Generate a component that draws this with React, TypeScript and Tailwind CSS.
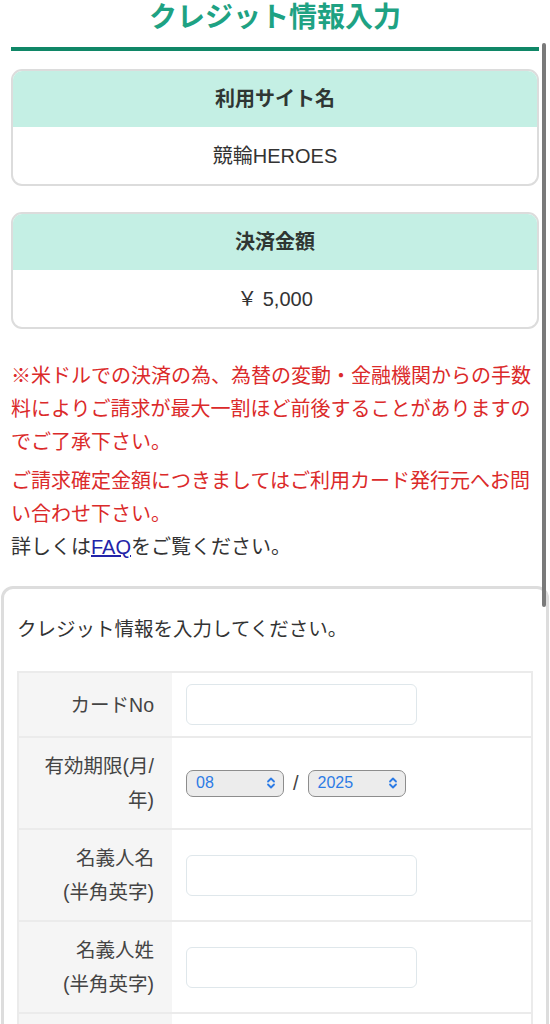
import React from "react";

function InfoCard({ title, value }: { title: string; value: string }) {
  return (
    <div className="border-2 border-[#dcdcdc] rounded-[11px] overflow-hidden bg-white">
      <div className="h-[56px] bg-[#c4efe4] flex items-center justify-center text-[20px] font-bold text-[#2f3633]">
        {title}
      </div>
      <div className="h-[57px] flex items-center justify-center text-[20px] text-[#333]">
        {value}
      </div>
    </div>
  );
}

function Chevron() {
  return (
    <svg width="10" height="14" viewBox="0 0 10 14" fill="none" stroke="#2c7be5" strokeWidth="1.8" strokeLinecap="round" strokeLinejoin="round">
      <path d="M2 5.5 L5 2.5 L8 5.5" />
      <path d="M2 8.5 L5 11.5 L8 8.5" />
    </svg>
  );
}

function FakeSelect({ value }: { value: string }) {
  return (
    <div className="w-[98px] h-[27px] rounded-[7px] border border-[#8d8d8d] bg-[#ececec] flex items-center justify-between pl-[9px] pr-[7px] text-[16px] text-[#2c7be5]">
      <span>{value}</span>
      <Chevron />
    </div>
  );
}

function TextInput() {
  return <div className="w-[231px] h-[41px] rounded-[6px] border border-[#dfe7eb] bg-white" />;
}

function Row({ label, children }: { label: React.ReactNode; children: React.ReactNode }) {
  return (
    <div className="flex border-b-2 border-[#ebebeb]">
      <div className="w-[153px] shrink-0 bg-[#f5f5f5] flex flex-col justify-center text-right pl-[17px] pr-[18px] py-[11px] text-[19.5px] leading-[34px] text-[#444]">
        <div>{label}</div>
      </div>
      <div className="flex-1 flex items-center pl-[14px] py-[11px]">{children}</div>
    </div>
  );
}

export default function App() {
  return (
    <div className="relative h-[1024px] w-[550px] overflow-hidden bg-white font-['Liberation_Sans','Noto_Sans_CJK_JP',sans-serif]">
      <div className="px-[11px]">
        <h1 className="text-center text-[28px] leading-[36px] font-bold text-[#1ea283]">
          クレジット情報入力
        </h1>
        <div className="mt-[11px] h-[4px] bg-[#108767]" />
        <div className="mt-[18px]">
          <InfoCard title="利用サイト名" value="競輪HEROES" />
        </div>
        <div className="mt-[26px]">
          <InfoCard title="決済金額" value="￥ 5,000" />
        </div>
        <div className="mt-[31px] text-[20px] leading-[33px]">
          <p className="text-[#db2a2a]">
            ※米ドルでの決済の為、為替の変動・金融機関からの手数料によりご請求が最大一割ほど前後することがありますのでご了承下さい。
          </p>
          <p className="mt-[6px] text-[#db2a2a]">
            ご請求確定金額につきましてはご利用カード発行元へお問い合わせ下さい。
          </p>
          <p className="text-[#333]">
            詳しくは<a href="#" className="text-[#2323a8] underline">FAQ</a>をご覧ください。
          </p>
        </div>
      </div>

      <div className="mx-[1px] mt-[22px] border-[3px] border-[#dddddd] rounded-t-[12px] px-[13px] pt-[24px] pb-[30px]">
        <p className="text-[19.5px] leading-[33px] text-[#333]">
          クレジット情報を入力してください。
        </p>
        <div className="mt-[25px] border-2 border-b-0 border-[#ebebeb]">
          <Row label="カードNo">
            <TextInput />
          </Row>
          <Row label="有効期限(月/年)">
            <div className="flex items-center">
              <FakeSelect value="08" />
              <span className="mx-[9px] text-[20px] text-[#444]">/</span>
              <FakeSelect value="2025" />
            </div>
          </Row>
          <Row
            label={
              <>
                名義人名
                <br />
                (半角英字)
              </>
            }
          >
            <TextInput />
          </Row>
          <Row
            label={
              <>
                名義人姓
                <br />
                (半角英字)
              </>
            }
          >
            <TextInput />
          </Row>
          <Row label="セキュリティコード">
            <TextInput />
          </Row>
        </div>
      </div>

      <div className="absolute right-[4px] top-[43px] w-[4px] h-[564px] rounded-full bg-[#7a7a7a]" />
    </div>
  );
}
